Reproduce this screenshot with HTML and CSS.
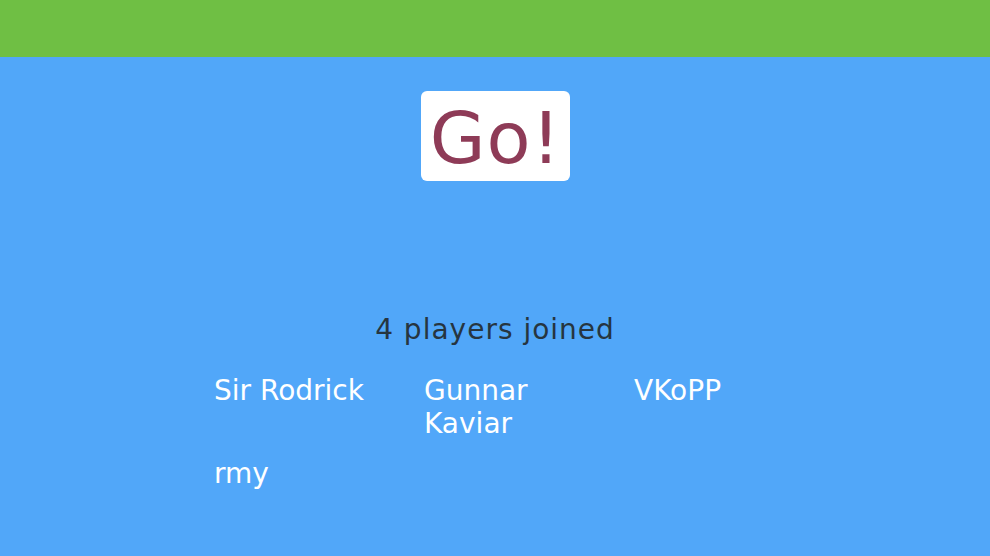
FILE: index.html
```html
<!DOCTYPE html>
<html>
<head>
<meta charset="utf-8">
<link rel="stylesheet" href="styles.css">
</head>
<body>
<header class="topbar"></header>
<main class="stage">
  <div class="go-box"><span class="go-text">Go!</span></div>
  <h2 class="count">4 players joined</h2>
  <ul class="players">
    <li class="player">Sir Rodrick</li>
    <li class="player">Gunnar Kaviar</li>
    <li class="player">VKoPP</li>
    <li class="player">rmy</li>
  </ul>
</main>
</body>
</html>
```
FILE: styles.css
```css
html, body {
  margin: 0;
  padding: 0;
  height: 100%;
}
body {
  background: #51a7f9;
  font-family: "DejaVu Sans", Verdana, sans-serif;
  overflow: hidden;
}
.topbar {
  height: 57px;
  background: #6fbf44;
}
.stage {
  display: flex;
  flex-direction: column;
  align-items: center;
  padding-top: 34px;
}
.go-box {
  width: 149px;
  height: 90px;
  background: #ffffff;
  border-radius: 6px;
  display: flex;
  align-items: center;
  justify-content: center;
}
.go-text {
  font-family: "DejaVu Sans", Verdana, sans-serif;
  font-size: 72px;
  line-height: 1;
  letter-spacing: 1px;
  color: #8e3b57;
  margin-top: 4px;
  margin-right: -1px;
}
.count {
  margin: 132px 0 0;
  font-size: 28px;
  font-weight: normal;
  line-height: 33.6px;
  letter-spacing: 1px;
  color: #263540;
}
.players {
  list-style: none;
  margin: 27px 0 0;
  padding: 0;
  width: 562px;
  display: grid;
  grid-template-columns: 210px 210px 1fr;
  row-gap: 16px;
}
.player {
  font-size: 28px;
  line-height: 33.6px;
  color: #ffffff;
  width: 150px;
}
```
